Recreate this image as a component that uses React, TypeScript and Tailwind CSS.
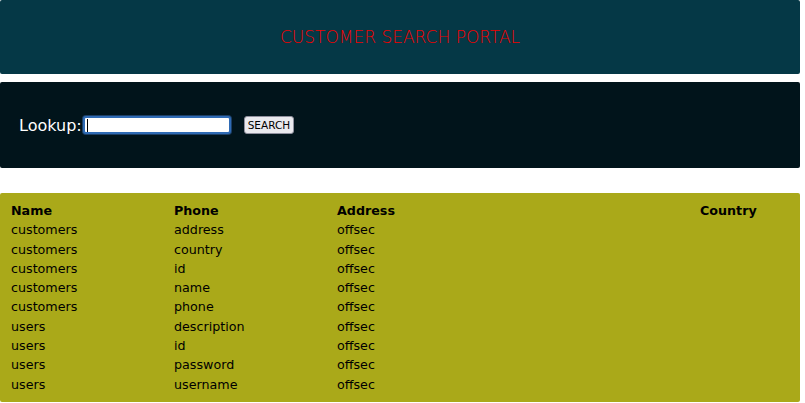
const rows: [string, string, string][] = [
  ["customers", "address", "offsec"],
  ["customers", "country", "offsec"],
  ["customers", "id", "offsec"],
  ["customers", "name", "offsec"],
  ["customers", "phone", "offsec"],
  ["users", "description", "offsec"],
  ["users", "id", "offsec"],
  ["users", "password", "offsec"],
  ["users", "username", "offsec"],
];

export default function App() {
  return (
    <div className="w-[800px] bg-white font-['DejaVu_Sans',sans-serif]">
      <header className="h-[74px] rounded-[2px] bg-[#053846] flex items-center justify-center">
        <h1 className="text-[17px] text-[#f00000] font-light pt-[2px]">
          CUSTOMER SEARCH PORTAL
        </h1>
      </header>

      <div className="mt-[8px] h-[86px] rounded-[2px] bg-[#01141b] flex items-center pl-[19px]">
        <label className="text-[16px] text-white mr-[1px] pt-[1px]">Lookup:</label>
        <div className="w-[148px] h-[18px] bg-white rounded-[3px] border-2 border-[#2f6bb5] shadow-[0_0_0_1px_#1c3f66] flex items-center px-[2px]">
          <span className="w-px h-[13px] bg-black" />
        </div>
        <button className="ml-[13px] h-[18px] px-[3px] rounded-[3px] bg-[#e9e9ed] border border-[#8f8f9d] text-[10.5px] text-black leading-none">
          SEARCH
        </button>
      </div>

      <section className="mt-[25px] h-[209px] rounded-[2px] bg-[#aaa919] px-[11px]">
        <div className="pt-[8px] text-[12.7px] text-black">
          <div className="grid grid-cols-[163px_163px_363px_1fr] font-bold leading-[19.3px]">
            <span>Name</span>
            <span>Phone</span>
            <span>Address</span>
            <span>Country</span>
          </div>
          {rows.map((r, i) => (
            <div key={i} className="grid grid-cols-[163px_163px_363px_1fr] leading-[19.3px]">
              <span>{r[0]}</span>
              <span>{r[1]}</span>
              <span>{r[2]}</span>
              <span />
            </div>
          ))}
        </div>
      </section>
    </div>
  );
}
